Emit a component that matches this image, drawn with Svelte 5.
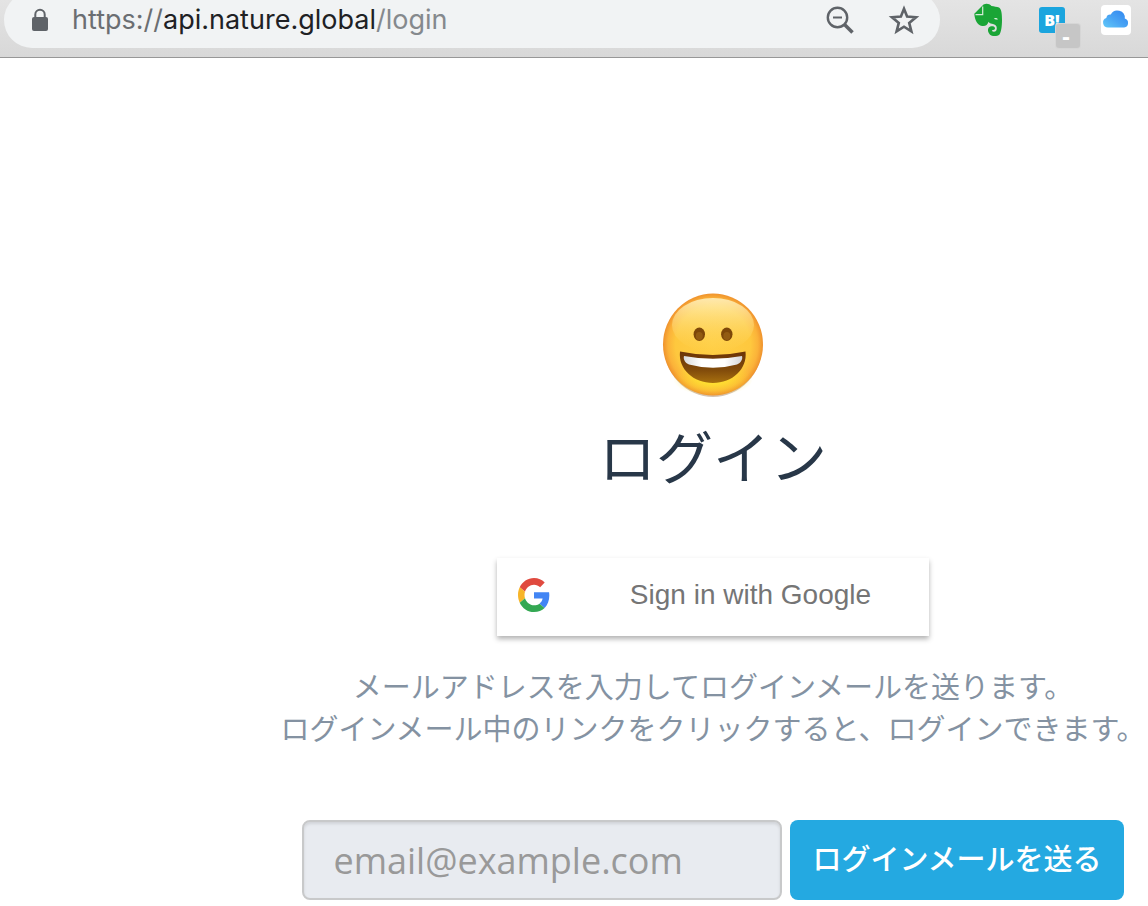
<script lang="ts">
	let email = '';

	const url = {
		scheme: 'https://',
		host: 'api.nature.global',
		path: '/login'
	};

	function handleSubmit(e: Event) {
		e.preventDefault();
	}
</script>

<header class="toolbar">
	<div class="address-bar">
		<svg class="lock" width="20" height="24" viewBox="0 0 20 24">
			<path d="M5.300 10V6.500a4.700 4.700 0 0 1 9.400 0V10" fill="none" stroke="#5f6368" stroke-width="2" />
			<rect x="2" y="9" width="16" height="14" rx="2" fill="#5f6368" />
		</svg>
		<div class="url">
			<span class="scheme">{url.scheme}</span><span class="host">{url.host}</span><span class="path">{url.path}</span>
		</div>
		<button class="tool" aria-label="Zoom">
			<svg width="32" height="32" viewBox="0 0 32 32" fill="none" stroke="#5f6368">
				<circle cx="13.500" cy="13.500" r="9.700" stroke-width="2.400" />
				<path d="M9 13.500h9" stroke-width="2" />
				<path d="M20.500 20.500l8 8" stroke-width="3.600" />
			</svg>
		</button>
		<button class="tool" aria-label="Bookmark">
			<svg width="32" height="32" viewBox="0 0 32 32" fill="none" stroke="#5f6368" stroke-width="2.600">
				<path d="M16 4.800l3.100 7.800 8.900.7-6.800 5.600 2.200 8.400L16 22.700l-7.400 4.600 2.200-8.400L4 13.300l8.900-.7z" />
			</svg>
		</button>
	</div>

	<button class="tool" aria-label="Evernote">
		<svg width="32" height="36" viewBox="0 0 32 36">
			<path fill="#1aa536" d="M11.500 2.500C14 1.300 17.500 1.500 19.500 4c2.500.6 5.500.6 7.500 1.500 2.500 1.500 3 6.500 3 12.500 0 7-1 12-2.500 14.500-2 2.100-7.500 2.100-9.500.3-2.200-2.300-2.700-5.300-1.200-7.200 1.400-1.600 5.200-1.800 6 0 .7 1.900-.6 2.700-2.400 2.400-.8.600 0 1.800 1.400 1.800 2.200 0 3-1.800 3-3.800 0-2.500-2.300-4-4.800-4.200-2-.2-2.800-1-3.500-2-.9 3.200-3 4.700-6.500 4.200-5-.7-7.200-6.500-7.700-12.200z" />
			<path d="M3.500 12.700h7.200V4.500" fill="none" stroke="#d5ead8" stroke-width="1.200" />
			<path d="M21.800 16.800q2.200-1.600 4.200.4-2.200.6-4.200-.4z" fill="#e8f5e9" />
		</svg>
	</button>
	<button class="tool hatena" aria-label="Hatena Bookmark">
		<span class="hatena-icon">B!</span>
		<span class="badge">-</span>
	</button>
	<button class="tool" aria-label="iCloud">
		<svg width="30" height="30" viewBox="0 0 30 30">
			<defs>
				<linearGradient id="cloud" x1="0" y1="1" x2="1" y2="0">
					<stop offset="0" stop-color="#62c9f8" />
					<stop offset="0.450" stop-color="#4aa5f4" />
					<stop offset="1" stop-color="#2f83ef" />
				</linearGradient>
			</defs>
			<rect width="30" height="30" rx="4" fill="#fff" />
			<path fill="url(#cloud)" d="M7 22.500A4.900 4.900 0 0 1 5.300 13 4.200 4.200 0 0 1 9.800 9.600a7.400 7.400 0 0 1 14 3.800 4.700 4.700 0 0 1-.6 9.100z" />
		</svg>
	</button>
</header>

<main>
	<svg class="face" width="104" height="106" viewBox="0 0 104 106" aria-hidden="true">
		<defs>
			<radialGradient id="skin" cx="0.500" cy="0.500" r="0.500">
				<stop offset="0" stop-color="#ffcf46" />
				<stop offset="0.750" stop-color="#fec83e" />
				<stop offset="0.900" stop-color="#fbb239" />
				<stop offset="1" stop-color="#ef922d" />
			</radialGradient>
			<linearGradient id="shine" x1="0" y1="0" x2="0" y2="1">
				<stop offset="0" stop-color="#fff3c4" stop-opacity="0.850" />
				<stop offset="1" stop-color="#ffd95c" stop-opacity="0" />
			</linearGradient>
			<radialGradient id="glow" cx="0.500" cy="0.500" r="0.500">
				<stop offset="0" stop-color="#fff02a" stop-opacity="0.900" />
				<stop offset="1" stop-color="#ffe02a" stop-opacity="0" />
			</radialGradient>
			<linearGradient id="mouth" x1="0" y1="0" x2="0" y2="1">
				<stop offset="0" stop-color="#6b3207" />
				<stop offset="0.600" stop-color="#824c0b" />
				<stop offset="1" stop-color="#a8700f" />
			</linearGradient>
			<linearGradient id="teeth" x1="0" y1="0" x2="1" y2="0">
				<stop offset="0" stop-color="#d9d9dc" />
				<stop offset="0.300" stop-color="#fff" />
				<stop offset="0.700" stop-color="#fff" />
				<stop offset="1" stop-color="#d5d5d8" />
			</linearGradient>
		</defs>
		<ellipse cx="52" cy="53" rx="49" ry="51" fill="#d3c2b2" />
		<ellipse cx="52" cy="51.500" rx="50" ry="51" fill="url(#skin)" />
		<ellipse cx="52" cy="86" rx="40" ry="17" fill="url(#glow)" />
		<ellipse cx="52" cy="32" rx="41" ry="27" fill="url(#shine)" />
		<ellipse cx="38.300" cy="41.300" rx="5.700" ry="6.700" fill="#7d4709" />
		<ellipse cx="65.800" cy="41.300" rx="5.700" ry="6.700" fill="#7d4709" />
		<ellipse cx="38.300" cy="43" rx="3.500" ry="4" fill="#925b12" />
		<ellipse cx="65.800" cy="43" rx="3.500" ry="4" fill="#925b12" />
		<path d="M19 58.500Q52 65.500 84.500 58.500C86.500 76 71.500 90 52 90S17 76 19 58.500z" fill="url(#mouth)" />
		<path d="M23 63Q52 68.500 81 63C82 66 80 70 76 71.500Q52 78 28 71.500C24 70 22 66 23 63z" fill="url(#teeth)" />
	</svg>
	<h1>ログイン</h1>

	<button class="google">
		<svg width="32" height="34" viewBox="0 0 48 48" preserveAspectRatio="none">
			<path fill="#e04a3f" d="M24 9.500c3.540 0 6.710 1.220 9.210 3.600l6.850-6.850C35.900 2.380 30.470 0 24 0 14.620 0 6.510 5.380 2.560 13.220l7.980 6.190C12.430 13.720 17.740 9.500 24 9.500z" />
			<path fill="#4285f4" d="M46.980 24.550c0-1.570-.15-3.090-.38-4.550H24v9.020h12.940c-.58 2.960-2.260 5.480-4.780 7.180l7.730 6c4.510-4.180 7.090-10.360 7.090-17.650z" />
			<path fill="#f7b529" d="M10.530 28.590c-.48-1.450-.76-2.990-.76-4.590s.27-3.140.76-4.590l-7.980-6.190C.92 16.460 0 20.120 0 24c0 3.880.92 7.540 2.560 10.780l7.970-6.190z" />
			<path fill="#34a853" d="M24 48c6.480 0 11.930-2.130 15.890-5.810l-7.730-6c-2.150 1.450-4.920 2.300-8.160 2.300-6.260 0-11.570-4.220-13.470-9.910l-7.980 6.190C6.510 42.620 14.620 48 24 48z" />
		</svg>
		<span>Sign in with Google</span>
	</button>

	<p class="lead">
		メールアドレスを入力してログインメールを送ります。<br />
		ログインメール中のリンクをクリックすると、ログインできます。
	</p>

	<form onsubmit={handleSubmit}>
		<input type="email" bind:value={email} placeholder="email@example.com" aria-label="email" />
		<button class="submit" type="submit">ログインメールを送る</button>
	</form>
</main>

<style>
	:global(body) {
		margin: 0;
		background: #fff;
	}

	button {
		padding: 0;
		border: none;
		background: none;
		cursor: pointer;
	}

	svg {
		display: block;
		flex: none;
	}

	/* Browser toolbar, its upper edge runs off the window */
	.toolbar {
		display: flex;
		align-items: flex-start;
		height: 57px;
		border-bottom: 1px solid #979797;
		background: linear-gradient(#e4e4e4, #d8d8d8);
		overflow: hidden;
	}

	.address-bar {
		display: flex;
		flex: 1;
		align-items: flex-end;
		box-sizing: border-box;
		height: 56px;
		margin: -8px 16px 0 4px;
		padding: 0 4px 8px 26px;
		border-radius: 28px;
		background: #f1f3f4;
	}

	.lock {
		margin-bottom: 8px;
	}

	.url {
		flex: 1;
		margin-left: 22px;
		font-family: Inter, Roboto, sans-serif;
		font-size: 27px;
		line-height: 40px;
		white-space: nowrap;
	}

	.scheme {
		color: #6b6e72;
	}

	.host {
		color: #202124;
	}

	.path {
		color: #85898d;
	}

	.tool {
		display: flex;
		flex: none;
		align-items: center;
		justify-content: center;
		width: 64px;
		height: 40px;
	}

	.hatena {
		position: relative;
	}

	.hatena-icon {
		width: 26px;
		height: 26px;
		border-radius: 3px;
		background: #1ba5de;
		color: #fff;
		font-family: "Open Sans", sans-serif;
		font-size: 16px;
		font-weight: 800;
		line-height: 26px;
	}

	.badge {
		position: absolute;
		top: 24px;
		left: 36px;
		width: 24px;
		height: 24px;
		border-radius: 3px;
		background: #c6c6c6;
		box-shadow: 0 0 0 1px #d6d6d6;
		color: #fff;
		font-family: "Liberation Sans", sans-serif;
		font-size: 24px;
		font-weight: bold;
		line-height: 26px;
		text-indent: -4px;
	}

	main {
		display: flex;
		flex-direction: column;
		align-items: center;
		padding: 235px 0 6px 278px;
		font-family: "Noto Sans CJK JP", sans-serif;
	}

	h1 {
		margin: 12px 0 61px;
		color: #283748;
		font-size: 57px;
		font-weight: 400;
		line-height: 86px;
	}

	.google {
		display: flex;
		align-items: center;
		gap: 22px;
		box-sizing: border-box;
		width: 432px;
		height: 78px;
		padding: 0 0 4px 21px;
		background: #fff;
		box-shadow: 0 3px 5px rgba(0, 0, 0, 0.3);
		color: #757575;
		font-family: "Liberation Sans", Arial, sans-serif;
		font-size: 28px;
	}

	.google span {
		flex: 1;
		text-align: center;
	}

	.lead {
		margin: 28px 0 72px;
		color: #8492a2;
		font-size: 29px;
		line-height: 42px;
		text-align: center;
		white-space: nowrap;
	}

	form {
		display: flex;
		gap: 8px;
	}

	input {
		box-sizing: border-box;
		width: 480px;
		height: 80px;
		padding: 0 29px;
		border: 2px solid #c8c9ca;
		border-radius: 8px;
		background: #e8ebf0;
		box-shadow: inset 0 2px 3px rgba(0, 0, 0, 0.1);
		font-family: "Open Sans", sans-serif;
		font-size: 36px;
	}

	input::placeholder {
		color: #999;
		opacity: 1;
	}

	.submit {
		height: 80px;
		padding: 0 22px 6px;
		border-radius: 8px;
		background: #24a9e1;
		color: #fff;
		font-family: inherit;
		font-size: 29px;
		font-weight: 500;
	}
</style>
